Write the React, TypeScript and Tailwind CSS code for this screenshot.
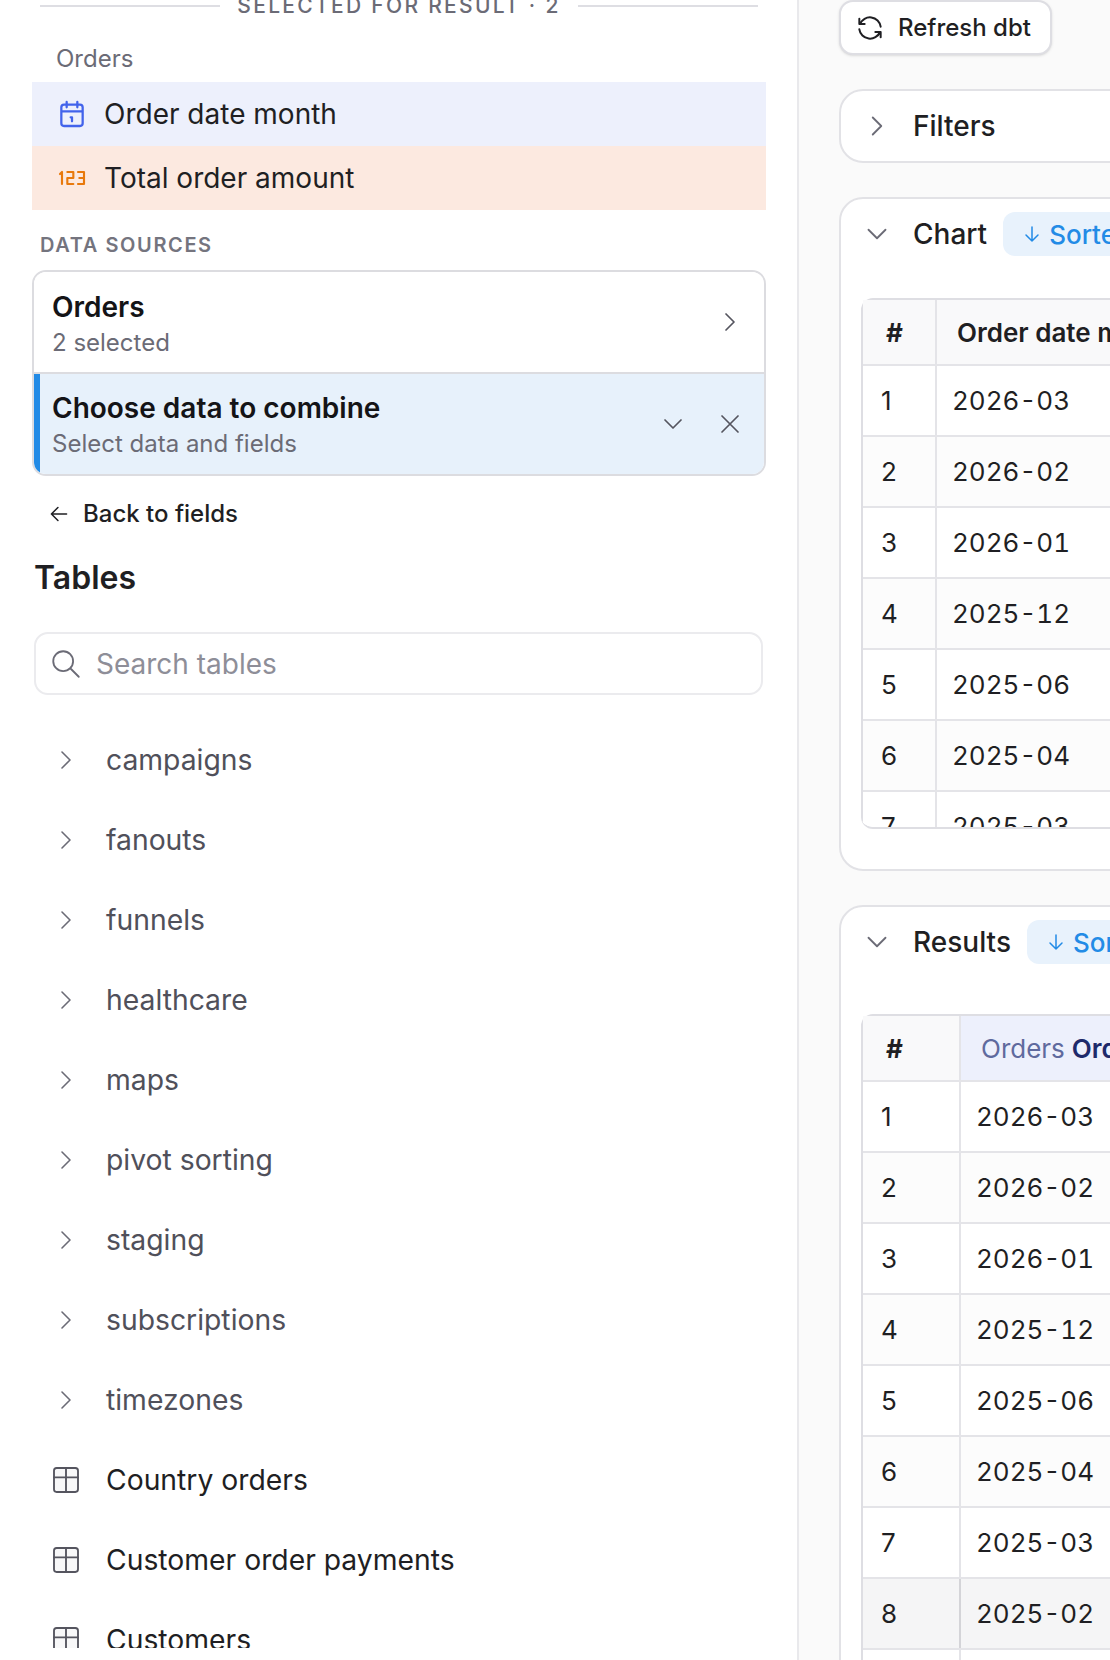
import React from 'react';

const Icon = ({ d, size = 24, sw = 1.5, className = '' }: { d: string; size?: number; sw?: number; className?: string }) => (
  <svg width={size} height={size} viewBox="0 0 24 24" fill="none" stroke="currentColor" strokeWidth={sw} strokeLinecap="round" strokeLinejoin="round" className={`shrink-0 ${className}`}>
    <path d={d} />
  </svg>
);

const chevronRight = 'M9 6l6 6l-6 6';
const chevronDown = 'M6 9l6 6l6 -6';
const close = 'M18 6l-12 12M6 6l12 12';
const arrowLeft = 'M5 12h14M5 12l6 6M5 12l6 -6';
const arrowDown = 'M12 5v14M18 13l-6 6M6 13l6 6';
const refresh = 'M20 11a8.1 8.1 0 0 0 -15.5 -2m-.5 -4v4h4M4 13a8.1 8.1 0 0 0 15.5 2m.5 4v-4h-4';
const search = 'M3 10a7 7 0 1 0 14 0a7 7 0 1 0 -14 0M21 21l-6 -6';

const CalendarIcon = () => (
  <svg width="32" height="32" viewBox="0 0 24 24" fill="none" stroke="currentColor" strokeWidth="1.7" strokeLinecap="round" strokeLinejoin="round" className="shrink-0 text-[#4263eb]">
    <path d="M4 7a2 2 0 0 1 2 -2h12a2 2 0 0 1 2 2v12a2 2 0 0 1 -2 2h-12a2 2 0 0 1 -2 -2zM16 3v4M8 3v4M4 10h16M11 14.5h1v3" />
  </svg>
);

const NumberIcon = () => (
  <svg width="32" height="32" viewBox="0 0 24 24" fill="none" stroke="#e8790c" strokeWidth="1.6" strokeLinecap="round" strokeLinejoin="round" className="shrink-0">
    <path d="M3 9l1.5 -1.5v9M8.5 7.5h4.5v4.5h-4.5v4.5h4.5M16.5 7.5h4.5v9h-4.5M17.5 12h3.5" />
  </svg>
);

const TableIcon = () => (
  <svg width="32" height="32" viewBox="0 0 24 24" stroke="#55555f" strokeWidth="1.4" strokeLinecap="round" strokeLinejoin="round" className="shrink-0">
    <path fill="#f8f8f9" d="M3 5a2 2 0 0 1 2 -2h14a2 2 0 0 1 2 2v14a2 2 0 0 1 -2 2h-14a2 2 0 0 1 -2 -2z" />
    <path fill="none" d="M3 10h18M12 3v18" />
  </svg>
);

const folders = ['campaigns', 'fanouts', 'funnels', 'healthcare', 'maps', 'pivot sorting', 'staging', 'subscriptions', 'timezones'];
const tables = ['Country orders', 'Customer order payments', 'Customers'];
const months = ['2026-03', '2026-02', '2026-01', '2025-12', '2025-06', '2025-04', '2025-03', '2025-02', '2025-01'];

const ListRow = ({ icon, label, muted }: { icon: React.ReactNode; label: string; muted?: boolean }) => (
  <div className="h-[80px] shrink-0 flex items-center">
    <div className="w-[32px] ml-[50px] flex justify-center">{icon}</div>
    <span className={`ml-[24px] text-[28.3px] ${muted ? 'text-[#50505a]' : 'text-[#1f1f23]'}`}>{label}</span>
  </div>
);

const DataTable = ({ firstCol, header, rows, hovered }: { firstCol: string; header: React.ReactNode; rows: string[]; hovered?: number }) => (
  <div className="border-2 border-b-0 border-[#dedee3] rounded-tl-[12px]">
    <div className="flex h-[66px] bg-[#f9f9fa] border-b-2 border-[#e4e4e8]">
      <div className={`${firstCol} shrink-0 border-r-2 border-[#e4e4e8] pl-[23px] flex items-center text-[26px] font-bold text-[#1f1f23]`}>#</div>
      {header}
    </div>
    {rows.map((m, i) => (
      <div
        key={m}
        className={`flex h-[71px] border-b-2 ${i + 1 === hovered ? 'bg-[#f5f5f6] border-[#e4e4e8]' : i % 2 === 1 ? 'bg-[#fcfcfc] border-[#e4e4e8]' : 'bg-white border-[#e4e4e8]'}`}
      >
        <div className={`${firstCol} shrink-0 border-r-2 ${i + 1 === hovered ? 'border-[#d4d4d8]' : 'border-[#e4e4e8]'} pl-[18px] flex items-center text-[26px] text-[#1f1f23]`}>{i + 1}</div>
        <div className="flex-1 pl-[15px] flex items-center text-[26px] tabular-nums text-[#1f1f23]">{m}</div>
      </div>
    ))}
  </div>
);

const SortBadge = () => (
  <div className="ml-[16px] h-[44px] pl-[17px] pr-[16px] bg-[#e8f2fc] rounded-[12px] flex items-center gap-[5px] text-[26px] text-[#228be6] whitespace-nowrap">
    <Icon d={arrowDown} size={24} />
    Sorted by 1 field
  </div>
);

export default function App() {
  return (
    <div className="h-[1660px] w-[1110px] overflow-hidden flex bg-[#fafafa] font-['Inter',sans-serif]">
      {/* Left panel - query builder */}
      <div className="w-[799px] shrink-0 h-full bg-white border-r-2 border-[#e9e9ec] pb-[12px] flex flex-col">
        <div className="-mt-[12px] h-[36px] pl-[40px] pr-[39px] flex items-center gap-[17px]">
          <div className="flex-1 h-[2px] bg-[#dedee3]" />
          <span className="text-[21px] font-medium tracking-[2.3px] text-[#6b6b76] whitespace-nowrap">SELECTED FOR RESULT · 2</span>
          <div className="flex-1 h-[2px] bg-[#dedee3]" />
        </div>
        <div className="mt-[12px] h-[46px] pl-[56px] flex items-center text-[24px] text-[#6b6b76]">Orders</div>
        <div className="ml-[32px] w-[734px] h-[64px] bg-[#edf0fc] flex items-center pl-[24px] gap-[16px] text-[28px] text-[#1f1f23]">
          <CalendarIcon />
          Order date month
        </div>
        <div className="ml-[32px] w-[734px] h-[64px] bg-[#fce9e0] flex items-center pl-[24px] gap-[16px] text-[28px] text-[#1f1f23]">
          <NumberIcon />
          Total order amount
        </div>
        <div className="mt-[21px] pl-[40px] h-[28px] flex items-center text-[20px] font-semibold tracking-[1.6px] text-[#74747e]">DATA SOURCES</div>
        <div className="mt-[11px] ml-[32px] w-[734px] h-[206px] border-2 border-[#dcdce0] rounded-[14px] overflow-hidden flex flex-col">
          <div className="h-[102px] shrink-0 pl-[18px] pr-[18px] flex items-center justify-between bg-white border-b-2 border-[#dcdce0]">
            <div className="pt-[5px]">
              <div className="text-[28px] leading-[36px] font-semibold text-[#141417]">Orders</div>
              <div className="text-[24px] leading-[36px] text-[#6b6b76]">2 selected</div>
            </div>
            <Icon d={chevronRight} size={32} sw={1.3} className="text-[#55555f]" />
          </div>
          <div className="flex-1 border-l-[6px] border-[#228be6] bg-[#e7f1fb] pl-[12px] pr-[18px] flex items-center">
            <div className="flex-1 pt-[4px]">
              <div className="text-[28px] leading-[36px] font-semibold text-[#141417]">Choose data to combine</div>
              <div className="text-[24px] leading-[36px] text-[#6b6b76]">Select data and fields</div>
            </div>
            <Icon d={chevronDown} size={32} sw={1.3} className="text-[#55555f]" />
            <Icon d={close} size={32} sw={1.3} className="ml-[25px] text-[#55555f]" />
          </div>
        </div>
        <div className="mt-[18px] ml-[46px] h-[40px] flex items-center gap-[11px] text-[24px] font-medium text-[#1f1f23]">
          <Icon d={arrowLeft} size={26} sw={1.4} />
          Back to fields
        </div>
        <div className="mt-[24px] ml-[34px] h-[40px] flex items-center text-[32px] font-semibold text-[#1f1f23]">Tables</div>
        <div className="mt-[34px] ml-[34px] w-[729px] h-[63px] shrink-0 border-2 border-[#ebebee] rounded-[14px] flex items-center pl-[13px] gap-[13px] text-[28px] text-[#8e8e98]">
          <Icon d={search} size={34} sw={1.3} className="text-[#6b6b76]" />
          Search tables
        </div>
        <div className="flex-1 overflow-hidden mt-[25px] flex flex-col">
          {folders.map((f) => (
            <ListRow key={f} label={f} muted icon={<Icon d={chevronRight} size={32} sw={1.2} className="text-[#6b6b76]" />} />
          ))}
          {tables.map((t) => (
            <ListRow key={t} label={t} icon={<TableIcon />} />
          ))}
        </div>
      </div>

      {/* Right panel - results */}
      <div className="flex-1 min-w-0 pl-[40px] overflow-hidden">
        <div className="w-[213px] h-[55px] bg-white border-2 border-[#dedee3] rounded-[14px] shadow-sm flex items-center pl-[13px] gap-[12px] text-[24px] font-medium text-[#1f1f23]">
          <Icon d={refresh} size={32} sw={1.5} />
          Refresh dbt
        </div>
        <div className="mt-[34px] w-[1000px] h-[74px] bg-white border-2 border-[#e2e2e6] rounded-[24px] flex items-center pl-[19px] text-[28px] font-medium text-[#1f1f23]">
          <Icon d={chevronRight} size={34} sw={1.3} className="text-[#6b6b76]" />
          <span className="ml-[19px]">Filters</span>
        </div>
        <div className="mt-[34px] w-[1000px] h-[674px] bg-white border-2 border-[#e2e2e6] rounded-[24px] pl-[20px]">
          <div className="mt-[13px] h-[44px] flex items-center -ml-[1px] text-[28px] font-medium text-[#1f1f23]">
            <Icon d={chevronDown} size={34} sw={1.3} className="text-[#6b6b76]" />
            <span className="ml-[19px]">Chart</span>
            <SortBadge />
          </div>
          <div className="mt-[42px] h-[531px] overflow-hidden rounded-bl-[12px] border-b-2 border-[#dedee3]">
            <DataTable
              firstCol="w-[74px]"
              rows={months.slice(0, 7)}
              header={<div className="flex-1 pl-[20px] flex items-center text-[26px] font-semibold text-[#1f1f23]">Order date month</div>}
            />
          </div>
        </div>
        <div className="mt-[34px] w-[1000px] h-[800px] bg-white border-2 border-[#e2e2e6] rounded-[24px] pl-[20px]">
          <div className="mt-[13px] h-[44px] flex items-center -ml-[1px] text-[28px] font-medium text-[#1f1f23]">
            <Icon d={chevronDown} size={34} sw={1.3} className="text-[#6b6b76]" />
            <span className="ml-[19px]">Results</span>
            <SortBadge />
          </div>
          <div className="mt-[50px]">
            <DataTable
              firstCol="w-[98px]"
              rows={months}
              hovered={8}
              header={
                <div className="flex-1 pl-[20px] bg-[#edf0fc] flex items-center text-[26px] text-[#5f6a9e]">
                  Orders <span className="ml-[7px] font-semibold text-[#1e2a6b]">Order date month</span>
                </div>
              }
            />
          </div>
        </div>
      </div>
    </div>
  );
}
